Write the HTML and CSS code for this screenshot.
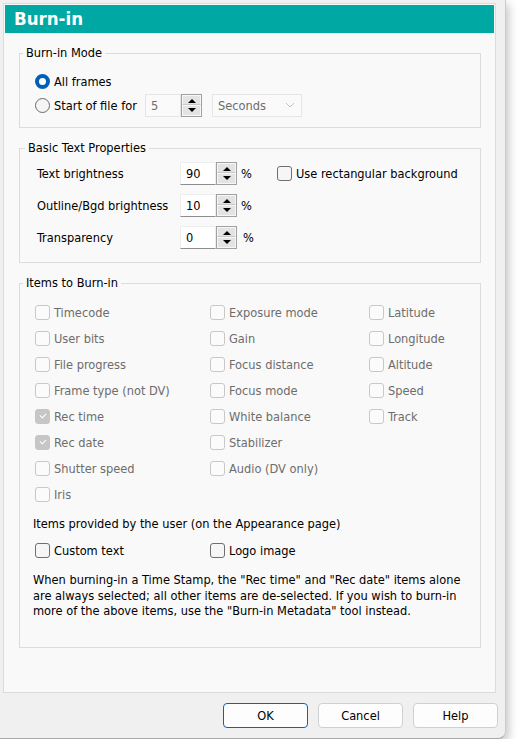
FILE: index.html
```html
<!DOCTYPE html>
<html lang="en">
<head>
    <meta charset="UTF-8" />
    <title>Burn-in</title>
    <link rel="stylesheet" href="styles.css">
</head>
<body>
    <div class="window">
        <div class="page">
            <div class="title-bar">Burn-in</div>

            <fieldset class="group mode-group">
                <legend>Burn-in Mode</legend>
                <div class="row">
                    <span class="radio checked"></span>
                    <span class="label-text">All frames</span>
                </div>
                <div class="row">
                    <span class="radio"></span>
                    <span class="label-text start-label">Start of file for</span>
                    <span class="spin disabled">
                        <span class="spin-value">5</span>
                        <span class="spin-buttons">
                            <span class="spin-btn up"></span>
                            <span class="spin-btn down"></span>
                        </span>
                    </span>
                    <span class="combo disabled">
                        Seconds
                        <svg class="chevron" width="10" height="6" viewBox="0 0 10 6">
                            <path d="M1 1 L5 5 L9 1" fill="none" stroke="#c4c4c4" stroke-width="1" />
                        </svg>
                    </span>
                </div>
            </fieldset>

            <fieldset class="group text-group">
                <legend>Basic Text Properties</legend>
                <div class="prop-row">
                    <span class="prop-label">Text brightness</span>
                    <span class="spin">
                        <span class="spin-value">90</span>
                        <span class="spin-buttons">
                            <span class="spin-btn up"></span>
                            <span class="spin-btn down"></span>
                        </span>
                    </span>
                    <span class="unit">%</span>
                    <span class="check"></span>
                    <span class="label-text">Use rectangular background</span>
                </div>
                <div class="prop-row">
                    <span class="prop-label">Outline/Bgd brightness</span>
                    <span class="spin">
                        <span class="spin-value">10</span>
                        <span class="spin-buttons">
                            <span class="spin-btn up"></span>
                            <span class="spin-btn down"></span>
                        </span>
                    </span>
                    <span class="unit">%</span>
                </div>
                <div class="prop-row">
                    <span class="prop-label">Transparency</span>
                    <span class="spin">
                        <span class="spin-value">0</span>
                        <span class="spin-buttons">
                            <span class="spin-btn up"></span>
                            <span class="spin-btn down"></span>
                        </span>
                    </span>
                    <span class="unit unit-wide">%</span>
                </div>
            </fieldset>

            <fieldset class="group items-group">
                <legend>Items to Burn-in</legend>
                <div class="items-grid">
                    <div class="item"><span class="check disabled"></span>Timecode</div>
                    <div class="item"><span class="check disabled"></span>Exposure mode</div>
                    <div class="item"><span class="check disabled"></span>Latitude</div>

                    <div class="item"><span class="check disabled"></span>User bits</div>
                    <div class="item"><span class="check disabled"></span>Gain</div>
                    <div class="item"><span class="check disabled"></span>Longitude</div>

                    <div class="item"><span class="check disabled"></span>File progress</div>
                    <div class="item"><span class="check disabled"></span>Focus distance</div>
                    <div class="item"><span class="check disabled"></span>Altitude</div>

                    <div class="item"><span class="check disabled"></span>Frame type (not DV)</div>
                    <div class="item"><span class="check disabled"></span>Focus mode</div>
                    <div class="item"><span class="check disabled"></span>Speed</div>

                    <div class="item"><span class="check disabled checked"></span>Rec time</div>
                    <div class="item"><span class="check disabled"></span>White balance</div>
                    <div class="item"><span class="check disabled"></span>Track</div>

                    <div class="item"><span class="check disabled checked"></span>Rec date</div>
                    <div class="item"><span class="check disabled"></span>Stabilizer</div>
                    <div class="item"></div>

                    <div class="item"><span class="check disabled"></span>Shutter speed</div>
                    <div class="item"><span class="check disabled"></span>Audio (DV only)</div>
                    <div class="item"></div>

                    <div class="item"><span class="check disabled"></span>Iris</div>
                </div>

                <div class="user-title">Items provided by the user (on the Appearance page)</div>
                <div class="items-grid user-items">
                    <div class="item enabled"><span class="check"></span>Custom text</div>
                    <div class="item enabled"><span class="check"></span>Logo image</div>
                </div>

                <p class="note">
                    When burning-in a Time Stamp, the "Rec time" and "Rec date" items alone<br>
                    are always selected; all other items are de-selected. If you wish to burn-in<br>
                    more of the above items, use the "Burn-in Metadata" tool instead.
                </p>
            </fieldset>
        </div>

        <div class="button-row">
            <button class="btn btn-default">OK</button>
            <button class="btn">Cancel</button>
            <button class="btn">Help</button>
        </div>
    </div>
</body>
</html>
```

FILE: styles.css
```css
* {
    box-sizing: border-box;
}

body {
    margin: 0;
    background: #ffffff;
    font-family: "DejaVu Sans Condensed", "DejaVu Sans", sans-serif;
    font-stretch: condensed;
    font-size: 12.7px;
    color: #000000;
}

.window {
    width: 506px;
    height: 739px;
    background: #f0f0f0;
    border-right: 1px solid #cbcbcb;
    border-bottom: 1px solid #a9a9a9;
    border-bottom-right-radius: 8px;
    box-shadow: 3px 4px 10px rgba(0, 0, 0, 0.22);
    padding: 3px 7px 0 3px;
}

.page {
    height: 690px;
    margin-right: 2px;
    border: 1px solid #dcdcdc;
    background: #f9f9f9;
    padding: 1px;
}

.title-bar {
    height: 28px;
    line-height: 28px;
    background: #00a8a4;
    color: #ffffff;
    font-size: 18.5px;
    font-weight: bold;
    padding-left: 9px;
}

/* group boxes */

.group {
    border: 1px solid #dcdcdc;
    margin: 12px 13px 0 14px;
    padding: 0 0 0 15px;
    min-width: 0;
}

.group legend {
    line-height: 16px;
    padding: 0 3px;
    margin-left: -12px;
}

.mode-group {
    padding-top: 8px;
    padding-bottom: 10px;
}

.text-group {
    padding-top: 1px;
    padding-bottom: 9px;
    padding-left: 17px;
}

.items-group {
    padding-top: 8px;
    padding-bottom: 28px;
}

.row {
    display: flex;
    align-items: center;
    height: 24px;
}

.label-text {
    margin-left: 4px;
}

.start-label {
    width: 91px;
}

/* radios and checkboxes */

.radio {
    width: 15px;
    height: 15px;
    border-radius: 50%;
    border: 1px solid #6b6b6b;
    background: #f5f5f5;
    flex-shrink: 0;
}

.radio.checked {
    border: 4px solid #005fb8;
    background: #ffffff;
}

.check {
    display: inline-block;
    position: relative;
    width: 15px;
    height: 15px;
    border-radius: 3px;
    border: 1px solid #6f6f6f;
    background: #f6f6f6;
    flex-shrink: 0;
}

.check.disabled {
    border-color: #c8c8c8;
    background: #fbfbfb;
}

.check.disabled.checked {
    background: #c6c6c6;
    border-color: #c6c6c6;
}

.check.checked::after {
    content: '';
    position: absolute;
    left: 4px;
    top: 3px;
    width: 5px;
    height: 3px;
    border-left: 1px solid #ffffff;
    border-bottom: 1px solid #ffffff;
    transform: rotate(-45deg);
}

/* spin edits */

.spin {
    display: flex;
    width: 57px;
    height: 23px;
    flex-shrink: 0;
}

.spin-value {
    width: 36px;
    background: #ffffff;
    border: 1px solid #eeeeee;
    border-bottom-color: #8d8d8d;
    padding-left: 5px;
    line-height: 21px;
}

.spin.disabled .spin-value {
    background: #fafafa;
    border-color: #e5e5e5;
    color: #6d6d6d;
}

.spin-buttons {
    width: 21px;
    display: flex;
    flex-direction: column;
    border: 1px solid #a0a0a0;
    background: #e3e3e3;
}

.spin-btn {
    flex: 1;
    position: relative;
    border: 1px solid #f7f7f7;
}

.spin-btn.up {
    border-bottom-color: #c8c8c8;
}

.spin-btn::after {
    content: '';
    position: absolute;
    left: 5px;
    top: 3px;
    border-left: 4px solid transparent;
    border-right: 4px solid transparent;
}

.spin-btn.up::after {
    border-bottom: 4px solid #000000;
}

.spin-btn.down::after {
    top: 2px;
    border-top: 4px solid #000000;
}

.combo {
    display: flex;
    align-items: center;
    justify-content: space-between;
    width: 90px;
    height: 23px;
    margin-left: 10px;
    padding: 0 6px 0 5px;
    border: 1px solid #e6e6e6;
    background: #fafafa;
    color: #6d6d6d;
}

/* basic text properties */

.prop-row {
    display: flex;
    align-items: center;
    height: 32px;
}

.prop-label {
    width: 143px;
}

.unit {
    width: 40px;
    padding-left: 4px;
}

.unit-wide {
    padding-left: 6px;
}

/* items */

.items-grid {
    display: grid;
    grid-template-columns: 175px 159px 1fr;
}

.item {
    display: flex;
    align-items: center;
    height: 26px;
    color: #6d6d6d;
}

.item .check {
    margin-right: 4px;
}

.item.enabled {
    color: #000000;
}

.user-title {
    margin: 9px 0 0 -2px;
    line-height: 16px;
}

.user-items {
    margin-top: 5px;
}

.note {
    margin: 9px 0 0 -2px;
    line-height: 15.5px;
}

/* dialog buttons */

.button-row {
    display: flex;
    justify-content: flex-end;
    gap: 10px;
    margin-top: 10px;
}

.btn {
    width: 85px;
    height: 25px;
    border: 1px solid #d0d0d0;
    border-radius: 4px;
    background: #fdfdfd;
    font-family: inherit;
    font-stretch: condensed;
    font-size: 12.7px;
    color: #000000;
}

.btn-default {
    border-color: #0067c0;
}
```
